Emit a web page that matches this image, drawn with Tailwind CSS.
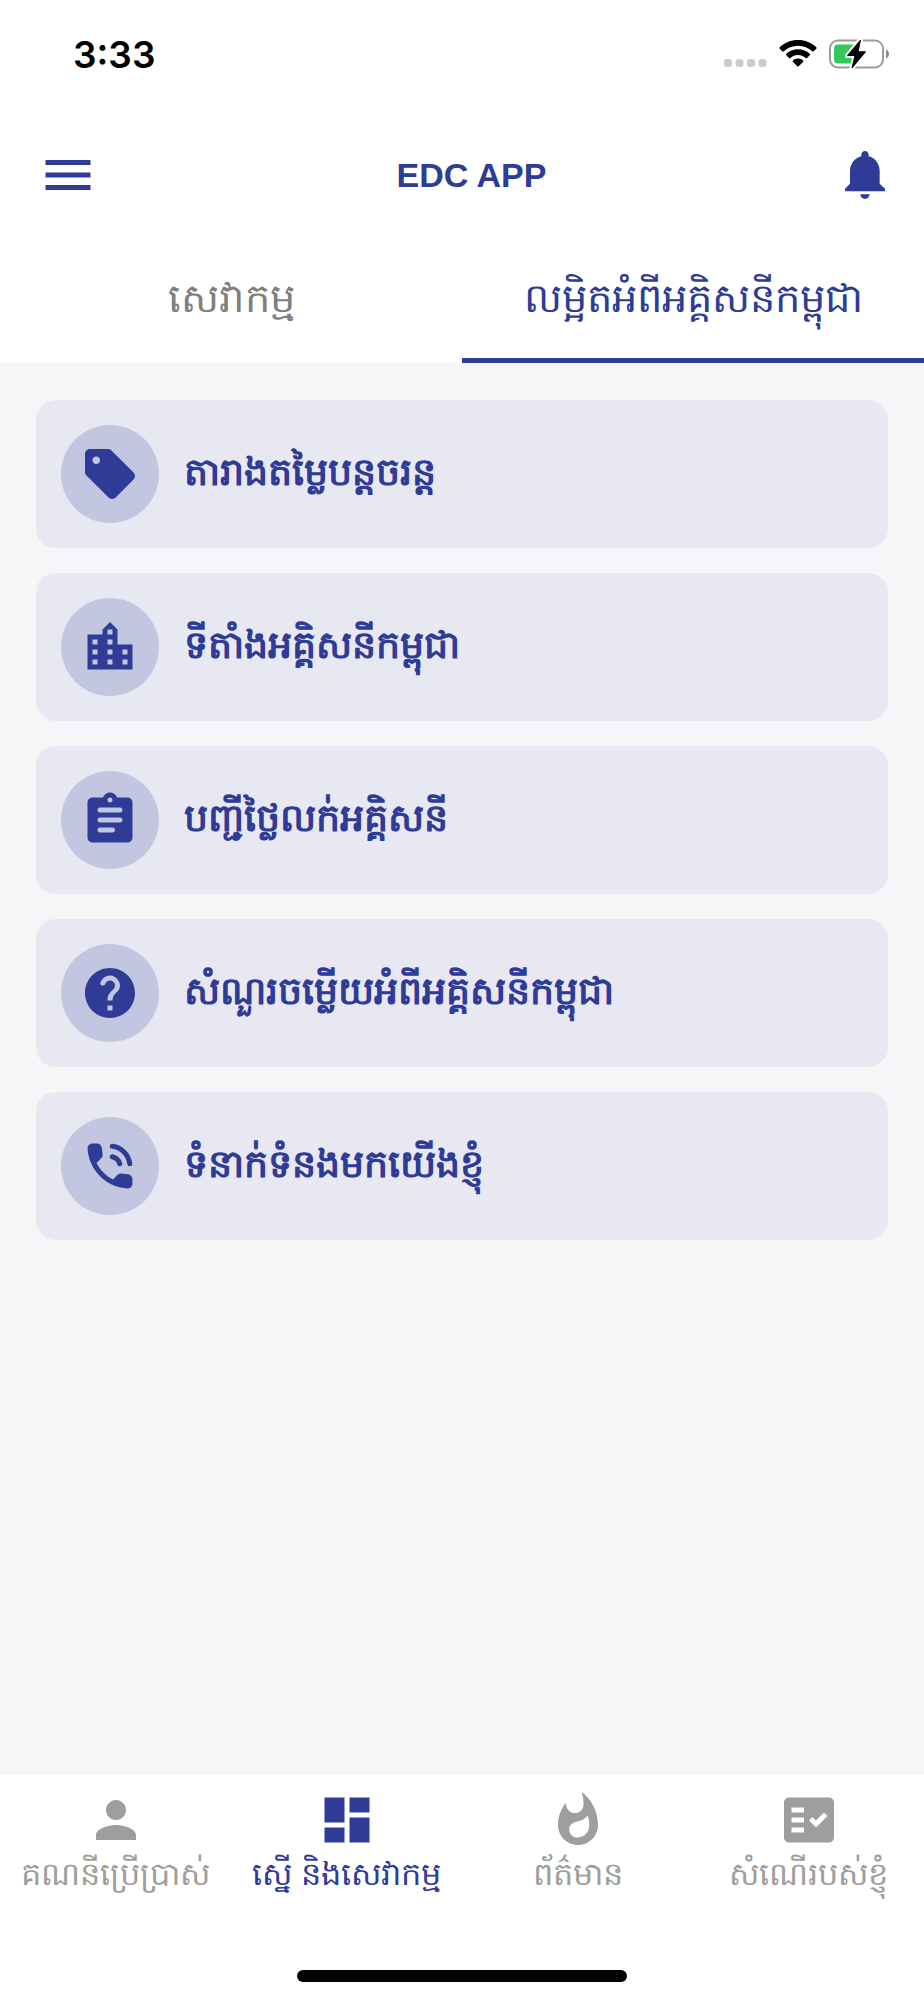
<!DOCTYPE html>
<html lang="km">
<head>
    <meta charset="UTF-8">
    <meta name="viewport" content="width=device-width, initial-scale=1.0">
    <title>EDC APP</title>
    <script src="https://cdn.jsdelivr.net/npm/@tailwindcss/browser@4"></script>
</head>
<body class="bg-[#f6f6f9] font-['Liberation_Sans',sans-serif] text-[#2e3b97]">
    <div class="flex min-h-screen flex-col">
        <header class="bg-white">
            <!-- Status bar -->
            <div class="flex h-[108px] items-center justify-between pr-[34px] pl-[73px]">
                <span class="font-['Inter',sans-serif] text-[37px] leading-none font-semibold text-black">3:33</span>
                <div class="flex items-center gap-3">
                    <svg class="h-7 w-[43px]" viewBox="0 0 43 28" fill="#cbcbcb">
                        <rect x="0" y="19" width="8" height="8" rx="3"/>
                        <rect x="11.5" y="19" width="8" height="8" rx="3"/>
                        <rect x="23" y="19" width="8" height="8" rx="3"/>
                        <rect x="34.5" y="19" width="8" height="8" rx="3"/>
                    </svg>
                    <svg class="h-7 w-[38px]" viewBox="0 0 38 28">
                        <path d="M19 0C26.2 0 32.6 2.7 37.3 7.2C37.8 7.7 37.8 8.2 37.3 8.7L34.7 11.3C34.3 11.7 33.7 11.7 33.2 11.3C29.5 7.9 24.6 5.8 19 5.8C13.4 5.8 8.5 7.9 4.8 11.3C4.3 11.7 3.7 11.7 3.3 11.3L0.7 8.7C0.2 8.2 0.2 7.7 0.7 7.2C5.4 2.7 11.8 0 19 0Z"/>
                        <path d="M19 9.3C23.7 9.3 27.7 11 30.7 13.8C31.2 14.3 31.2 14.8 30.7 15.3L28 17.9C27.6 18.3 27.1 18.3 26.6 17.9C24.5 16.1 22 15 19 15C16 15 13.5 16.1 11.4 17.9C10.9 18.3 10.4 18.3 10 17.9L7.3 15.3C6.8 14.8 6.8 14.3 7.3 13.8C10.3 11 14.3 9.3 19 9.3Z"/>
                        <path d="M19 18.5C21 18.5 22.8 19.2 24 20.4C24.5 20.9 24.4 21.4 24 21.9L19.7 26.2C19.2 26.7 18.8 26.7 18.3 26.2L14 21.9C13.6 21.4 13.5 20.9 14 20.4C15.2 19.2 17 18.5 19 18.5Z"/>
                    </svg>
                    <svg class="h-[30px] w-[61px]" viewBox="0 0 61 30">
                        <rect x="1" y="1.5" width="53" height="27" rx="8" fill="none" stroke="#9a9a9a" stroke-width="2"/>
                        <path d="M57 10.5c2 .6 3 2.5 3 4.5s-1 3.9-3 4.5z" fill="#8a8a8a"/>
                        <path d="M9 5.5h16v19H9a4 4 0 0 1-4-4v-11a4 4 0 0 1 4-4z" fill="#35c759"/>
                        <path d="M31.5 1L18.5 16.5H26L23 29L36.5 12.8H29Z" fill="#000" stroke="#fff" stroke-width="5" stroke-linejoin="round"/>
                        <path d="M31.5 1L18.5 16.5H26L23 29L36.5 12.8H29Z" fill="#000" stroke="#000" stroke-width="1" stroke-linejoin="round"/>
                    </svg>
                </div>
            </div>

            <!-- App bar -->
            <div class="flex h-[134px] items-center justify-between pr-[39px] pl-[38px]">
                <button type="button" aria-label="Menu">
                    <svg class="size-[60px]" viewBox="0 0 24 24" fill="currentColor"><path d="M3 18h18v-2H3v2zm0-5h18v-2H3v2zm0-7v2h18V6H3z"/></svg>
                </button>
                <h1 class="text-[34px] font-bold">EDC APP</h1>
                <button type="button" aria-label="Notifications">
                    <svg class="h-12 w-10" viewBox="0 0 120 144" fill="currentColor">
                        <path d="M60 0C54 0 49 5 49 11V16C29 21 15 39 15 60V98L0 113V121H120V113L104 98V60C104 39 91 21 71 16V11C71 5 66 0 60 0Z"/>
                        <path d="M46 130h28c0 8-6 14-14 14s-14-6-14-14z"/>
                    </svg>
                </button>
            </div>

            <!-- Tabs -->
            <div role="tablist" class="grid h-[121px] grid-cols-2 text-[40px]">
                <button type="button" role="tab" aria-selected="false" class="border-b-[5px] border-transparent pb-1 text-[#7f7f7f]">សេវាកម្ម</button>
                <button type="button" role="tab" aria-selected="true" class="border-b-[5px] border-[#2e3b97] pb-1">លម្អិតអំពីអគ្គិសនីកម្ពុជា</button>
            </div>
        </header>

        <main class="flex grow flex-col gap-[25px] px-9 pt-[37px] text-[38px] font-bold">
            <a href="#" class="flex h-[148px] items-center gap-[25px] rounded-[20px] bg-[#e8e8f3] px-[25px]">
                <span class="flex size-[98px] shrink-0 items-center justify-center rounded-full bg-[#c3c6e1]">
                    <svg class="size-[60px]" viewBox="0 0 24 24" fill="currentColor"><path d="M21.41 11.41l-8.83-8.83C12.21 2.21 11.7 2 11.17 2H4c-1.1 0-2 .9-2 2v7.17c0 .53.21 1.04.59 1.41l8.83 8.83c.78.78 2.05.78 2.83 0l7.17-7.17c.78-.78.78-2.04-.01-2.83zM6.5 8C5.67 8 5 7.33 5 6.5S5.67 5 6.5 5 8 5.67 8 6.5 7.33 8 6.5 8z"/></svg>
                </span>
                <span class="pb-1">តារាងតម្លៃបន្តចរន្ត</span>
            </a>
            <a href="#" class="flex h-[148px] items-center gap-[25px] rounded-[20px] bg-[#e8e8f3] px-[25px]">
                <span class="flex size-[98px] shrink-0 items-center justify-center rounded-full bg-[#c3c6e1]">
                    <svg class="size-[60px]" viewBox="0 0 24 24" fill="currentColor"><path d="M15 11V5l-3-3-3 3v2H3v14h18V11h-6zm-8 8H5v-2h2v2zm0-4H5v-2h2v2zm0-4H5V9h2v2zm6 8h-2v-2h2v2zm0-4h-2v-2h2v2zm0-4h-2V9h2v2zm0-4h-2V5h2v2zm6 12h-2v-2h2v2zm0-4h-2v-2h2v2z"/></svg>
                </span>
                <span class="pb-1">ទីតាំងអគ្គិសនីកម្ពុជា</span>
            </a>
            <a href="#" class="flex h-[148px] items-center gap-[25px] rounded-[20px] bg-[#e8e8f3] px-[25px]">
                <span class="flex size-[98px] shrink-0 items-center justify-center rounded-full bg-[#c3c6e1]">
                    <svg class="size-[60px]" viewBox="0 0 24 24" fill="currentColor"><path d="M19 3h-4.18C14.4 1.84 13.3 1 12 1s-2.4.84-2.82 2H5c-1.1 0-2 .9-2 2v14c0 1.1.9 2 2 2h14c1.1 0 2-.9 2-2V5c0-1.1-.9-2-2-2zm-7 0c.55 0 1 .45 1 1s-.45 1-1 1-1-.45-1-1 .45-1 1-1zm1 14H8c-.55 0-1-.45-1-1s.45-1 1-1h5c.55 0 1 .45 1 1s-.45 1-1 1zm3-4H8c-.55 0-1-.45-1-1s.45-1 1-1h8c.55 0 1 .45 1 1s-.45 1-1 1zm0-4H8c-.55 0-1-.45-1-1s.45-1 1-1h8c.55 0 1 .45 1 1s-.45 1-1 1z"/></svg>
                </span>
                <span class="pb-1">បញ្ជីថ្លៃលក់អគ្គិសនី</span>
            </a>
            <a href="#" class="flex h-[148px] items-center gap-[25px] rounded-[20px] bg-[#e8e8f3] px-[25px]">
                <span class="flex size-[98px] shrink-0 items-center justify-center rounded-full bg-[#c3c6e1]">
                    <svg class="size-[60px]" viewBox="0 0 24 24" fill="currentColor"><path d="M12 2C6.48 2 2 6.48 2 12s4.48 10 10 10 10-4.48 10-10S17.52 2 12 2zm1 17h-2v-2h2v2zm2.07-7.75l-.9.92c-.5.51-.86.97-1.04 1.69-.08.32-.13.68-.13 1.14h-2v-.5c0-.46.08-.9.22-1.31.2-.58.53-1.1.95-1.52l1.24-1.26c.46-.44.68-1.1.55-1.8-.13-.72-.69-1.33-1.39-1.53-1.11-.31-2.14.32-2.47 1.27-.12.37-.43.65-.82.65h-.3C8.4 9 8 8.44 8.16 7.88c.43-1.47 1.68-2.59 3.23-2.83 1.52-.24 2.97.55 3.87 1.8 1.18 1.63.83 3.38-.19 4.4z"/></svg>
                </span>
                <span class="pb-1">សំណួរចម្លើយអំពីអគ្គិសនីកម្ពុជា</span>
            </a>
            <a href="#" class="flex h-[148px] items-center gap-[25px] rounded-[20px] bg-[#e8e8f3] px-[25px]">
                <span class="flex size-[98px] shrink-0 items-center justify-center rounded-full bg-[#c3c6e1]">
                    <svg class="size-[60px]" viewBox="0 0 24 24" fill="currentColor">
                        <path d="M19.23 15.26l-2.54-.29c-.61-.07-1.21.14-1.64.57l-1.84 1.84c-2.83-1.44-5.15-3.75-6.59-6.59l1.85-1.85c.43-.43.64-1.03.57-1.64l-.29-2.52c-.12-1.01-.97-1.77-1.99-1.77H5.03c-1.13 0-2.07.94-2 2.07.53 8.54 7.36 15.36 15.89 15.89 1.13.07 2.07-.87 2.07-2v-1.73c.01-1.01-.75-1.86-1.76-1.98z"/>
                        <path d="M12.9 4.1A8 8 0 0 1 19.9 11.1M12.9 8.3A4 4 0 0 1 15.9 11.1" fill="none" stroke="currentColor" stroke-width="2" stroke-linecap="round"/>
                    </svg>
                </span>
                <span class="pb-1">ទំនាក់ទំនងមកយើងខ្ញុំ</span>
            </a>
        </main>

        <footer class="bg-white">
            <nav class="grid h-[195px] grid-cols-4 pt-[15px] text-[32px] leading-[48px] text-[#9e9e9e]">
                <a href="#" class="flex flex-col items-center whitespace-nowrap">
                    <svg class="size-[60px]" viewBox="0 0 24 24" fill="currentColor"><path d="M12 12c2.21 0 4-1.79 4-4s-1.79-4-4-4-4 1.79-4 4 1.79 4 4 4zm0 2c-2.67 0-8 1.34-8 4v2h16v-2c0-2.66-5.33-4-8-4z"/></svg>
                    <span>គណនីប្រើប្រាស់</span>
                </a>
                <a href="#" aria-current="page" class="flex flex-col items-center whitespace-nowrap text-[#2e3b97]">
                    <svg class="size-[60px]" viewBox="0 0 24 24" fill="currentColor"><path d="M3 13h8V3H3v10zm0 8h8v-6H3v6zm10 0h8V11h-8v10zm0-18v6h8V3h-8z"/></svg>
                    <span>ស្នើ និងសេវាកម្ម</span>
                </a>
                <a href="#" class="flex flex-col items-center whitespace-nowrap">
                    <svg class="size-[60px]" viewBox="0 0 24 24" fill="currentColor"><path d="M13.5.67s.74 2.65.74 4.8c0 2.06-1.35 3.73-3.41 3.73-2.07 0-3.63-1.67-3.63-3.73l.03-.36C5.21 7.51 4 10.62 4 14c0 4.42 3.58 8 8 8s8-3.58 8-8C20 8.61 17.41 3.8 13.5.67zM11.71 19c-1.78 0-3.22-1.4-3.22-3.14 0-1.62 1.05-2.76 2.81-3.12 1.77-.36 3.6-1.21 4.62-2.58.39 1.29.59 2.65.59 4.04 0 2.65-2.15 4.8-4.8 4.8z"/></svg>
                    <span>ព័ត៌មាន</span>
                </a>
                <a href="#" class="flex flex-col items-center whitespace-nowrap">
                    <svg class="size-[60px]" viewBox="0 0 24 24" fill="currentColor"><path fill-rule="evenodd" d="M20 3H4c-1.1 0-2 .9-2 2v14c0 1.1.9 2 2 2h16c1.1 0 2-.9 2-2V5c0-1.1-.9-2-2-2zM10 17H5v-2h5v2zm0-4H5v-2h5v2zm0-4H5V7h5v2zm4.82 6L12 12.16l1.41-1.41 1.41 1.42L17.99 9l1.42 1.42L14.82 15z"/></svg>
                    <span>សំណើរបស់ខ្ញុំ</span>
                </a>
            </nav>
            <div class="mx-auto mb-[18px] h-3 w-[330px] rounded-full bg-black"></div>
        </footer>
    </div>
</body>
</html>
